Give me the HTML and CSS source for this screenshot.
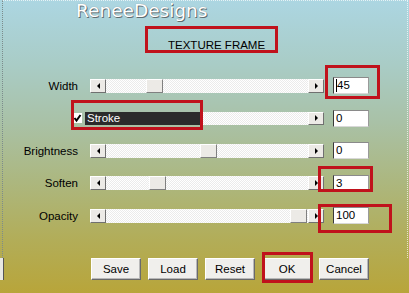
FILE: index.html
```html
<!DOCTYPE html>
<html lang="en">
<head>
    <meta charset="UTF-8">
    <title>Texture Frame</title>
    <link rel="stylesheet" href="styles.css">
</head>
<body>
    <div class="dialog">
        <div class="brand">ReneeDesigns</div>
        <div class="caption">TEXTURE FRAME</div>

        <div class="rows">
            <div class="row">
                <span class="label">Width</span>
                <div class="scroll">
                    <span class="arrow left"></span>
                    <div class="track"><span class="thumb" style="left: 40px"></span></div>
                    <span class="arrow right"></span>
                </div>
                <div class="field"><span class="caret"></span>45</div>
            </div>

            <div class="row">
                <span class="check">
                    <svg width="9" height="10" viewBox="0 0 9 10"><path d="M1.5 5 L3.5 7.5 L7.5 2" fill="none" stroke="#000" stroke-width="2"/></svg>
                </span>
                <div class="scroll stroke">
                    <span class="selected">Stroke</span>
                    <div class="track"></div>
                    <span class="arrow right"></span>
                </div>
                <div class="field">0</div>
            </div>

            <div class="row">
                <span class="label">Brightness</span>
                <div class="scroll">
                    <span class="arrow left"></span>
                    <div class="track"><span class="thumb" style="left: 94px"></span></div>
                    <span class="arrow right"></span>
                </div>
                <div class="field">0</div>
            </div>

            <div class="row">
                <span class="label">Soften</span>
                <div class="scroll">
                    <span class="arrow left"></span>
                    <div class="track"><span class="thumb" style="left: 43px"></span></div>
                    <span class="arrow right"></span>
                </div>
                <div class="field">3</div>
            </div>

            <div class="row">
                <span class="label">Opacity</span>
                <div class="scroll">
                    <span class="arrow left"></span>
                    <div class="track"><span class="thumb" style="left: 184px"></span></div>
                    <span class="arrow right"></span>
                </div>
                <div class="field">100</div>
            </div>
        </div>

        <div class="buttons">
            <button>Save</button>
            <button>Load</button>
            <button>Reset</button>
            <button>OK</button>
            <button>Cancel</button>
        </div>

        <!-- annotation boxes -->
        <span class="edge"></span>
        <span class="mark mark-title"></span>
        <span class="mark mark-width"></span>
        <span class="mark mark-stroke"></span>
        <span class="mark mark-soften"></span>
        <span class="mark mark-opacity"></span>
        <span class="mark mark-ok"></span>
    </div>
</body>
</html>
```

FILE: styles.css
```css
body {
    margin: 0;
    padding: 0;
    font-family: 'Liberation Sans', Arial, sans-serif;
    font-size: 11.5px;
    color: #000;
}

.dialog {
    position: relative;
    width: 409px;
    height: 293px;
    overflow: hidden;
    background: linear-gradient(to bottom, #acd6e2 0%, #a9ccc6 22%, #a9c1a6 42%, #acb77f 62%, #b2ad58 82%, #b8a53a 100%);
}

/* dotted frame round the capture */
.dialog::before {
    content: '';
    position: absolute;
    top: 0;
    left: 2px;
    right: 1px;
    height: 257px;
    border: 1px dotted rgba(255, 255, 255, 0.7);
    border-left-color: #7c8c8c;
    border-bottom: none;
}

.brand {
    font-family: 'DejaVu Sans', sans-serif;
    font-size: 18.5px;
    line-height: 19px;
    padding-top: 1px;
    color: #fff;
    padding-left: 76px;
    text-shadow: 1px 1px 0 #5f6b6f, 0 0 1px #7c888c;
}

.caption {
    margin-top: 18px;
    line-height: 14px;
    padding-left: 168px;
}

.rows {
    margin-top: 25px;
    display: flex;
    flex-direction: column;
    gap: 15.5px;
}

.row {
    display: flex;
    align-items: center;
    height: 17px;
}

.label {
    width: 78px;
    margin-right: 12px;
    text-align: right;
    line-height: 14px;
}

.check {
    width: 9px;
    height: 10px;
    margin-left: 73px;
    margin-right: 3px;
    background: #fff;
    display: flex;
}

.scroll {
    display: flex;
    width: 234px;
    height: 14px;
}

.scroll.stroke {
    width: 239px;
    height: 13px;
}

.arrow {
    box-sizing: border-box;
    width: 16px;
    height: 100%;
    background: #eceae6;
    border: 1px solid;
    border-color: #fff #707070 #707070 #fff;
    display: flex;
    align-items: center;
    justify-content: center;
}

.arrow::before {
    content: '';
    border: 3px solid transparent;
}

.arrow.left::before {
    border-right: 3px solid #000;
    border-left-width: 0;
}

.arrow.right::before {
    border-left: 3px solid #000;
    border-right-width: 0;
}

.track {
    flex: 1;
    position: relative;
    background-color: #fff;
    background-image: repeating-conic-gradient(#ebebeb 0 25%, #fff 0 50%);
    background-size: 2px 2px;
}

.thumb {
    position: absolute;
    top: 0;
    box-sizing: border-box;
    width: 17px;
    height: 14px;
    background: #eceae6;
    border: 1px solid;
    border-color: #fff #808080 #808080 #fff;
}

.selected {
    width: 116px;
    background: #2b2b2b;
    color: #fff;
    line-height: 13px;
    padding-left: 2px;
    box-sizing: border-box;
}

.field {
    box-sizing: border-box;
    width: 36px;
    height: 17px;
    margin-left: 9px;
    background: #fff;
    border-top: 1px solid #8a8a8a;
    border-left: 1px solid #3a3a3a;
    border-right: 1px solid #9a9a9a;
    border-bottom: 1px solid #d8d8d8;
    padding-left: 2px;
    line-height: 15px;
    display: flex;
    align-items: center;
}

.caret {
    width: 1px;
    height: 13px;
    background: #000;
}

.buttons {
    margin-top: 34px;
    padding-left: 91px;
    display: flex;
    gap: 7px;
}

.buttons button {
    width: 50px;
    height: 22px;
    padding: 0;
    font-family: inherit;
    font-size: 11.5px;
    background: #f0efec;
    border: 1px solid;
    border-color: #fff #6a6a6a #6a6a6a #fff;
    box-shadow: inset -1px -1px 0 #b8b8b8;
}

.edge {
    position: absolute;
    left: 0;
    top: 258px;
    width: 3px;
    height: 22px;
    background: #e8e8e4;
    border-right: 1px solid #555;
}

/* red highlight boxes */
.mark {
    position: absolute;
    box-sizing: border-box;
    border: 3px solid #c0121c;
}

.mark-title { left: 145px; top: 26px; width: 133px; height: 27px; }
.mark-width { left: 325px; top: 65px; width: 55px; height: 34px; }
.mark-stroke { left: 71px; top: 100px; width: 132px; height: 30px; }
.mark-soften { left: 318px; top: 166px; width: 55px; height: 26px; }
.mark-opacity { left: 318px; top: 204px; width: 74px; height: 29px; }
.mark-ok { left: 262px; top: 252px; width: 51px; height: 31px; }
```
